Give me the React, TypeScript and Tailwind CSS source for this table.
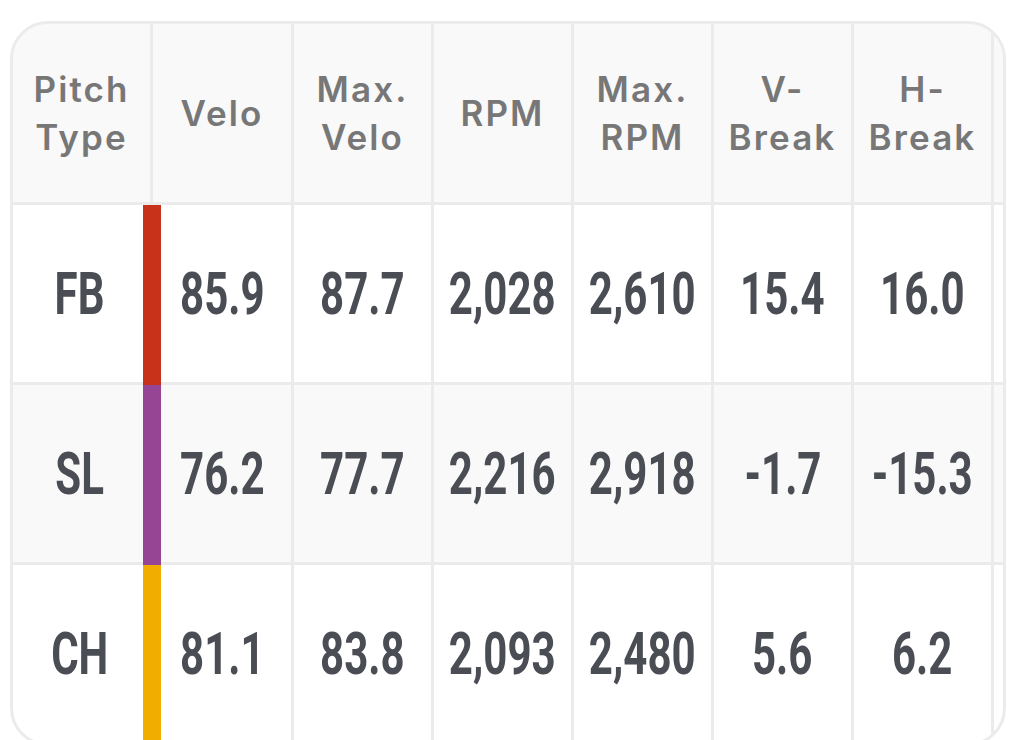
const headers = [
  ["Pitch", "Type"],
  ["Velo"],
  ["Max.", "Velo"],
  ["RPM"],
  ["Max.", "RPM"],
  ["V-", "Break"],
  ["H-", "Break"],
  [],
]

const rows = [
  { type: "FB", color: "bg-[#c8321a]", bg: "bg-white", values: ["85.9", "87.7", "2,028", "2,610", "15.4", "16.0", ""] },
  { type: "SL", color: "bg-[#964595]", bg: "bg-[#f9f9f9]", values: ["76.2", "77.7", "2,216", "2,918", "-1.7", "-15.3", ""] },
  { type: "CH", color: "bg-[#f2ae00]", bg: "bg-white", values: ["81.1", "83.8", "2,093", "2,480", "5.6", "6.2", ""] },
]

const numClass = "font-['Roboto',sans-serif] font-bold scale-x-[0.7] text-[60px] text-[#4a4d54] inline-block"

export default function App() {
  return (
    <div className="w-[1014px] h-[740px] bg-white overflow-hidden pl-[10px] pt-[21px]">
      <div className="w-[996px] h-[725px] rounded-[38px] border-[3px] border-[#ebebeb] overflow-hidden">
        <div className="grid w-max grid-cols-[137px_138px_137px_137px_137px_137px_137px_137px] grid-rows-[178px_177px_177px_177px] gap-[3px] bg-[#ebebeb]">
          {headers.map((h, i) => (
            <div
              key={i}
              className="bg-[#f9f9f9] flex flex-col items-center justify-center text-[#777777] font-['Inter',sans-serif] font-semibold text-[35px] leading-[48px] tracking-[0.06em]"
            >
              {h.map((line) => (
                <span key={line}>{line}</span>
              ))}
            </div>
          ))}
          {rows.map((r) => (
            <>
              <div key={r.type} className={`relative ${r.bg} flex items-center justify-center`}>
                <span className={`${numClass} pr-[6px]`}>{r.type}</span>
                <div className={`absolute z-10 left-[130px] top-0 w-[18px] h-[calc(100%+3px)] ${r.color}`} />
              </div>
              {r.values.map((v, j) => (
                <div key={r.type + j} className={`${r.bg} flex items-center justify-center`}>
                  <span className={numClass}>{v}</span>
                </div>
              ))}
            </>
          ))}
        </div>
      </div>
    </div>
  )
}
